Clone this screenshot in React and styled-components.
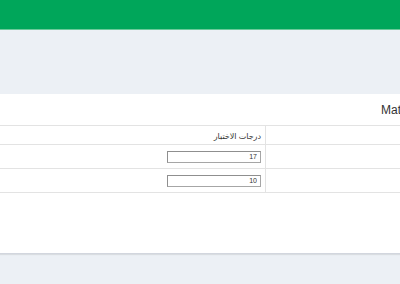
import React from "react";
import styled, { createGlobalStyle } from "styled-components";

const GlobalStyle = createGlobalStyle`
  html, body {
    margin: 0;
    padding: 0;
    background: #ecf0f5;
    font-family: "Liberation Sans", Arial, sans-serif;
    overflow: hidden;
  }
`;

const Page = styled.div`
  width: 400px;
  height: 284px;
  overflow: hidden;
  background: #ecf0f5;
`;

const TopBar = styled.header`
  height: 30px;
  background: #00a65a;
  border-bottom: 1px solid #6cc99a;
  box-sizing: border-box;
`;

const Content = styled.main`
  padding-top: 64px;
`;

const Card = styled.section`
  background: #ffffff;
  height: 160px;
  box-sizing: border-box;
  border-bottom: 1px solid #d2d6de;
  box-shadow: 0 1px 1px rgba(0, 0, 0, 0.08);
`;

const CardHeader = styled.div`
  height: 31px;
  padding-left: 381px;
  box-sizing: border-box;
  display: flex;
  align-items: center;
`;

const Title = styled.h3`
  margin: 0;
  font-size: 12px;
  font-weight: normal;
  color: #333;
  white-space: nowrap;
`;

const Table = styled.div`
  display: grid;
  grid-template-columns: 266px 1fr;
  border-top: 1px solid #e3e3e3;
`;

const Cell = styled.div`
  height: ${p => p.$h}px;
  box-sizing: border-box;
  border-bottom: 1px solid #e3e3e3;
  border-right: ${p => (p.$first ? "1px solid #e3e3e3" : "none")};
  display: flex;
  align-items: center;
  justify-content: flex-end;
  padding-right: 4px;
`;

const HeadText = styled.span`
  font-family: "Noto Sans", "DejaVu Sans", sans-serif;
  font-size: 8px;
  color: #333;
  direction: rtl;
`;

const ScoreInput = styled.input`
  width: 94px;
  height: 12px;
  box-sizing: border-box;
  border: 1px solid #a6a6a6;
  border-top-color: #8f8f8f;
  border-left-color: #8f8f8f;
  padding: 0 3px;
  font-family: "Liberation Sans", Arial, sans-serif;
  font-size: 7px;
  color: #333;
  text-align: right;
  background: #fff;
  outline: none;
`;

const rows = ["17", "10"];

export default function App() {
  return (
    <Page>
      <GlobalStyle />
      <TopBar />
      <Content>
        <Card>
          <CardHeader>
            <Title>Matières</Title>
          </CardHeader>
          <Table>
            <Cell $first $h={19}>
              <HeadText>درجات الاختبار</HeadText>
            </Cell>
            <Cell $h={19} />
            {rows.map((v, i) => (
              <React.Fragment key={i}>
                <Cell $first $h={24}>
                  <ScoreInput defaultValue={v} />
                </Cell>
                <Cell $h={24} />
              </React.Fragment>
            ))}
          </Table>
        </Card>
      </Content>
    </Page>
  );
}
